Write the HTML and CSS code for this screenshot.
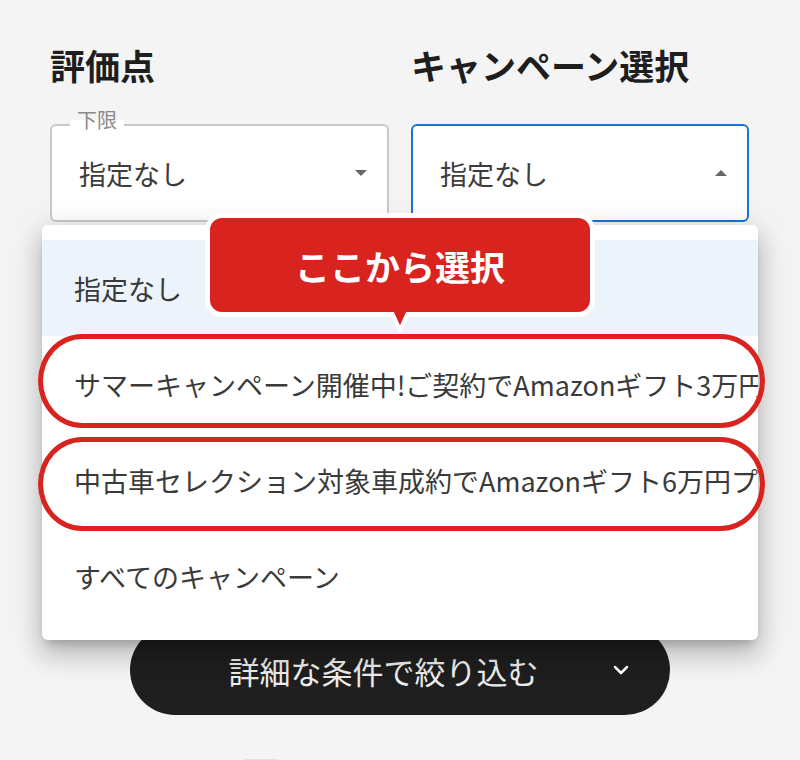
FILE: index.html
```html
<!DOCTYPE html>
<html lang="ja">
<head>
    <meta charset="UTF-8">
    <meta name="viewport" content="width=device-width, initial-scale=1.0">
    <title>キャンペーン選択</title>
    <link rel="stylesheet" href="styles.css">
</head>
<body>
    <div class="page">
        <div class="filters">
            <div class="field">
                <h2>評価点</h2>
                <div class="select">
                    <span class="select-label">下限</span>
                    <span class="select-value">指定なし</span>
                    <svg class="select-arrow" width="12" height="6" viewBox="0 0 12 6"><path d="M0 0h12L6 6z" fill="#666"/></svg>
                </div>
            </div>
            <div class="field">
                <h2>キャンペーン選択</h2>
                <div class="select select-open">
                    <span class="select-value">指定なし</span>
                    <svg class="select-arrow" width="12" height="6" viewBox="0 0 12 6"><path d="M0 6h12L6 0z" fill="#666"/></svg>
                </div>
            </div>
        </div>

        <button type="button" class="more">
            <span>詳細な条件で絞り込む</span>
            <svg class="more-icon" width="16" height="10" viewBox="0 0 16 10"><polyline points="2,2 8,8 14,2" fill="none" stroke="#fff" stroke-width="2.5" stroke-linecap="round" stroke-linejoin="round"/></svg>
        </button>
        <div class="next-hint"></div>

        <!-- open dropdown -->
        <ul class="menu">
            <li class="active">指定なし</li>
            <li>サマーキャンペーン開催中!ご契約でAmazonギフト3万円プレゼント</li>
            <li>中古車セレクション対象車成約でAmazonギフト6万円プレゼント</li>
            <li>すべてのキャンペーン</li>
        </ul>

        <!-- annotations -->
        <div class="mark mark-first"></div>
        <div class="mark mark-second"></div>
        <div class="callout">
            ここから選択
            <svg class="callout-tail" width="30" height="24" viewBox="0 0 30 24"><polygon points="3,-8 27,-8 15,18" fill="#d8231f" stroke="#fff" stroke-width="4" stroke-linejoin="round"/></svg>
        </div>
    </div>
</body>
</html>
```

FILE: styles.css
```css
body {
    margin: 0;
    background-color: #f4f4f4;
    font-family: 'Noto Sans CJK JP', sans-serif;
    color: #3a3a3a;
}

.page {
    position: relative;
    height: 760px;
    padding: 47px 51px 0 50px;
    box-sizing: border-box;
    overflow: hidden;
}

.filters {
    display: grid;
    grid-template-columns: 339px 338px;
    column-gap: 22px;
}

h2 {
    margin: 0 0 42px;
    font-size: 35px;
    line-height: 1;
    font-weight: bold;
    color: #1e1e1e;
}

.select {
    position: relative;
    display: flex;
    align-items: center;
    height: 98px;
    padding: 0 20px 0 27px;
    box-sizing: border-box;
    border: 2px solid #c9c9c9;
    border-radius: 6px;
    background-color: #fff;
}

.select-open {
    border-color: #1a73d6;
}

.select-label {
    position: absolute;
    top: -16px;
    left: 18px;
    padding: 0 7px;
    font-size: 20px;
    line-height: 20px;
    color: #8a8a8a;
    background: linear-gradient(#f4f4f4 50%, #fff 50%);
}

.select-value {
    font-size: 27px;
    color: #3c3c3c;
}

.select-arrow {
    margin-left: auto;
}

.more {
    display: flex;
    align-items: center;
    width: 540px;
    height: 90px;
    margin: 403px auto 0;
    padding: 0 41px 0 99px;
    border: none;
    border-radius: 45px;
    background-color: #1f1f1f;
    color: #ececec;
    font-family: inherit;
    font-size: 31px;
}

.more-icon {
    margin-left: auto;
}

.next-hint {
    width: 37px;
    height: 10px;
    margin: 44px 0 0 193px;
    border-radius: 4px 4px 0 0;
    background-color: #e2e2e2;
}

.menu {
    position: absolute;
    top: 225px;
    left: 42px;
    width: 716px;
    margin: 0;
    padding: 15px 0 16px;
    list-style: none;
    background-color: #fff;
    border-radius: 6px;
    overflow: hidden;
    box-shadow: 0 8px 10px -5px rgba(0, 0, 0, 0.2), 0 16px 24px 2px rgba(0, 0, 0, 0.14), 0 6px 30px 5px rgba(0, 0, 0, 0.12);
}

.menu li {
    display: flex;
    align-items: center;
    height: 96px;
    padding: 0 32px;
    font-size: 27px;
    white-space: nowrap;
}

.menu li.active {
    background-color: #ecf3fb;
}

.mark {
    position: absolute;
    left: 38px;
    width: 727px;
    height: 94px;
    box-sizing: border-box;
    border: 5px solid #d8231f;
    border-radius: 44px / 47px;
}

.mark-first {
    top: 334px;
}

.mark-second {
    top: 437px;
}

.callout {
    position: absolute;
    top: 213px;
    left: 205px;
    display: flex;
    align-items: center;
    justify-content: center;
    width: 390px;
    height: 104px;
    box-sizing: border-box;
    border: 5px solid #fff;
    border-radius: 17px;
    background-color: #d8231f;
    color: #fff;
    font-size: 35px;
    font-weight: bold;
}

.callout-tail {
    position: absolute;
    top: 100%;
    left: 175px;
}
```
